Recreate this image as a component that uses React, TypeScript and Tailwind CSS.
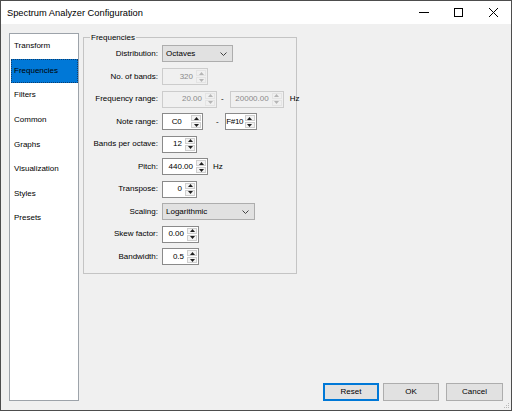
import React from "react";

const tabs = ["Transform", "Frequencies", "Filters", "Common", "Graphs", "Visualization", "Styles", "Presets"];

function Tri({ up, disabled }: { up?: boolean; disabled?: boolean }) {
  const fill = disabled ? "#b5b5b5" : "#1e1e1e";
  return (
    <svg width="5" height="3" viewBox="0 0 5 3" className="block">
      {up ? <polygon points="2.5,0 5,3 0,3" fill={fill} /> : <polygon points="0,0 5,0 2.5,3" fill={fill} />}
    </svg>
  );
}

function Spin({
  value,
  width,
  disabled,
  center,
}: {
  value: string;
  width: string;
  disabled?: boolean;
  center?: boolean;
}) {
  return (
    <div
      className={
        "flex h-[17px] border " +
        width +
        (disabled ? " border-[#cccccc] bg-[#f0f0f0] text-[#8a8a8a]" : " border-[#8a8a8a] bg-white text-black")
      }
    >
      <div
        className={
          "flex flex-1 items-center overflow-hidden whitespace-nowrap " +
          (center ? "justify-center tracking-[-0.3px]" : "justify-end pr-[2px]")
        }
      >
        {value}
      </div>
      <div className="flex w-[12px] flex-col gap-[1px] p-[1px]">
        <div
          className={
            "flex flex-1 items-center justify-center border " +
            (disabled ? "border-[#e4e4e4] bg-[#f0f0f0]" : "border-[#cfcfcf] bg-[#f3f3f3]")
          }
        >
          <Tri up disabled={disabled} />
        </div>
        <div
          className={
            "flex flex-1 items-center justify-center border " +
            (disabled ? "border-[#e4e4e4] bg-[#f0f0f0]" : "border-[#cfcfcf] bg-[#f3f3f3]")
          }
        >
          <Tri disabled={disabled} />
        </div>
      </div>
    </div>
  );
}

function Combo({ value, width }: { value: string; width: string }) {
  return (
    <div className={"flex h-[17px] items-center border border-[#adadad] bg-[#e1e1e1] pl-[3px] pr-[5px] " + width}>
      <span className="flex-1">{value}</span>
      <svg width="7" height="4" viewBox="0 0 7 4" className="block">
        <polyline points="0.5,0.5 3.5,3.5 6.5,0.5" fill="none" stroke="#404040" strokeWidth="1" />
      </svg>
    </div>
  );
}

function Label({ children }: { children: React.ReactNode }) {
  return <div className="text-right">{children}</div>;
}

export default function App() {
  return (
    <div className="flex h-[411px] w-[512px] flex-col border border-[#4d4d4d] font-['Liberation_Sans',Arial,sans-serif] text-[8px] leading-[10px] text-black">
      {/* title bar */}
      <div className="flex h-[23px] items-center bg-white">
        <div className="flex-1 pl-[6px] text-[9.3px]">Spectrum Analyzer Configuration</div>
        <div className="flex h-full w-[35px] items-center justify-center">
          <svg width="10" height="1" viewBox="0 0 10 1">
            <line x1="0" y1="0.5" x2="10" y2="0.5" stroke="#000" strokeWidth="1" />
          </svg>
        </div>
        <div className="flex h-full w-[35px] items-center justify-center">
          <svg width="9" height="9" viewBox="0 0 9 9">
            <rect x="0.5" y="0.5" width="8" height="8" fill="none" stroke="#000" strokeWidth="1" />
          </svg>
        </div>
        <div className="flex h-full w-[35px] items-center justify-center">
          <svg width="9" height="9" viewBox="0 0 9 9">
            <line x1="0" y1="0" x2="9" y2="9" stroke="#000" strokeWidth="1" />
            <line x1="9" y1="0" x2="0" y2="9" stroke="#000" strokeWidth="1" />
          </svg>
        </div>
      </div>

      {/* body */}
      <div className="relative flex flex-1 gap-[4px] bg-[#f0f0f0] pb-[9px] pl-[8px] pr-[8px] pt-[9px]">
        {/* list */}
        <div className="flex w-[70px] flex-col border border-[#9da3aa] bg-white pl-[1px]">
          {tabs.map((t) => (
            <div
              key={t}
              className={
                "flex h-[24.57px] items-center pl-[2px] " +
                (t === "Frequencies" ? "border border-dotted border-[#0c3d6e] bg-[#0078d7]" : "border border-transparent")
              }
            >
              {t}
            </div>
          ))}
        </div>

        {/* right side */}
        <div className="flex flex-1 flex-col justify-between">
          <div className="relative mt-[4px] h-[237px] w-[214px] border border-[#c4c4c4] pb-[4px] pt-[4.7px]">
            <span className="absolute left-[6px] top-[-6px] bg-[#f0f0f0] px-[1px] leading-[12px]">Frequencies</span>
            <div className="grid auto-rows-[22.56px] grid-cols-[74px_1fr] items-center gap-x-[4px]">
              <Label>Distribution:</Label>
              <div>
                <Combo value="Octaves" width="w-[71px]" />
              </div>

              <Label>No. of bands:</Label>
              <div>
                <Spin value="320" width="w-[46px]" disabled />
              </div>

              <Label>Frequency range:</Label>
              <div className="flex items-center">
                <Spin value="20.00" width="w-[55px]" disabled />
                <span className="pl-[4px] pr-[6px]">-</span>
                <Spin value="20000.00" width="w-[54px]" disabled />
                <span className="pl-[6px]">Hz</span>
              </div>

              <Label>Note range:</Label>
              <div className="flex items-center">
                <Spin value="C0" width="w-[41px]" center />
                <span className="pl-[13px] pr-[6px]">-</span>
                <Spin value="F#10" width="w-[32px]" center />
              </div>

              <Label>Bands per octave:</Label>
              <div>
                <Spin value="12" width="w-[35px]" />
              </div>

              <Label>Pitch:</Label>
              <div className="flex items-center">
                <Spin value="440.00" width="w-[46px]" />
                <span className="pl-[5px]">Hz</span>
              </div>

              <Label>Transpose:</Label>
              <div>
                <Spin value="0" width="w-[35px]" />
              </div>

              <Label>Scaling:</Label>
              <div>
                <Combo value="Logarithmic" width="w-[93px]" />
              </div>

              <Label>Skew factor:</Label>
              <div>
                <Spin value="0.00" width="w-[37px]" />
              </div>

              <Label>Bandwidth:</Label>
              <div>
                <Spin value="0.5" width="w-[37px]" />
              </div>
            </div>
          </div>

          <div className="flex justify-end">
            <button className="h-[18px] w-[56px] border border-[#0078d7] bg-[#e1e1e1] shadow-[inset_0_0_0_1px_#0078d7]">
              Reset
            </button>
            <button className="ml-[4px] h-[18px] w-[56px] border border-[#adadad] bg-[#e1e1e1]">OK</button>
            <button className="ml-[7px] h-[18px] w-[57px] border border-[#adadad] bg-[#e1e1e1]">Cancel</button>
          </div>
        </div>

        {/* size grip */}
        <svg width="7" height="7" viewBox="0 0 7 7" className="absolute bottom-[1px] right-[1px]">
          <rect x="5" y="1" width="1" height="1" fill="#b8b8b8" />
          <rect x="3" y="3" width="1" height="1" fill="#b8b8b8" />
          <rect x="5" y="3" width="1" height="1" fill="#b8b8b8" />
          <rect x="1" y="5" width="1" height="1" fill="#b8b8b8" />
          <rect x="3" y="5" width="1" height="1" fill="#b8b8b8" />
          <rect x="5" y="5" width="1" height="1" fill="#b8b8b8" />
        </svg>
      </div>
    </div>
  );
}
